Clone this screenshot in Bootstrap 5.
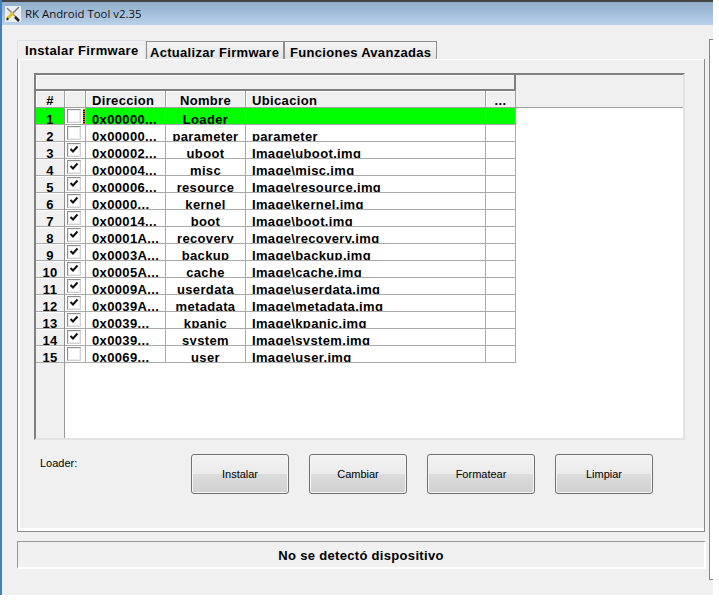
<!DOCTYPE html>
<html lang="es">
<head>
<meta charset="utf-8">
<title>RK Android Tool v2.35</title>
<link href="https://cdn.jsdelivr.net/npm/bootstrap@5.3.0/dist/css/bootstrap.min.css" rel="stylesheet">
<style>
html,body{background:#fff;height:601px;overflow:hidden}
body{font-family:"Liberation Sans",Arial,sans-serif;color:#000}
.tool-window{width:713px;height:595px;background:#f0f0f0;border-left:2px solid #3f7fc4}
.tool-title{height:25px;border-top:2px solid #444;background:linear-gradient(#8facca,#b9d1ea);padding-left:3px;font:11.4px "Open Sans",sans-serif;color:#111}
.tool-title svg{width:16px;height:16px;margin-right:4px}
.tool-main{width:689px;margin-left:15px;padding-top:15px}
.tool-strip{width:4px;height:541px;margin:14px 0 0 3px;background:#fff;border-left:1px solid #84868c;border-top:1px solid #84868c;border-bottom:1px solid #84868c}
.tool-text{font:bold 13px "Liberation Sans",Arial,sans-serif;letter-spacing:.3px;color:#000}
.nav-tabs.tool-tabs{height:19px;border:0;flex-wrap:nowrap}
.tool-tabs .nav-link{height:18px;margin:1px 0 0;padding:0 0 0 3px;border:0;border-top:1px solid #8f8f8f;border-left:1px solid #8f8f8f;border-right:1px solid #8f8f8f;border-radius:0;background:linear-gradient(#f5f5f5,#e4e4e4);line-height:21px;white-space:nowrap;overflow:hidden}
.tool-tabs .nav-link.active{height:19px;margin-top:0;padding:0 0 0 7px;background:#f0f0f0;line-height:20px;color:#000;letter-spacing:.35px}
.tab-first{width:129px}
.tab-second{width:138px}
.tool-tabs .nav-link.tab-third{width:153px;padding-left:5px}
.tool-panel{width:688px;height:473px;padding:14px 0 0 16px;border:1px solid #8a8a8a;border-top:0;box-shadow:inset 2px 1px 0 #fff,inset 0 -3px 0 #fff}
.grid-box{width:651px;height:367px;overflow:hidden;border-top:2px solid #808080;border-left:2px solid #808080;border-right:2px solid #e2e2e2;border-bottom:2px solid #e2e2e2;background:linear-gradient(#f0f0f0,#f0f0f0) left top/100% 32px no-repeat,linear-gradient(#a0a0a0,#a0a0a0) left 32px/100% 1px no-repeat,linear-gradient(to right,#f0f0f0 28px,#999 28px,#999 29px,transparent 29px),#fff}
.grid-table.table{width:480px;table-layout:fixed;border-collapse:separate;border-spacing:0;margin:0;--bs-table-bg:transparent;--bs-table-color:#000}
.grid-table th,.grid-table td{height:17px;padding:7px 0 0;overflow:hidden;white-space:nowrap;text-align:center;vertical-align:top;border:0;border-right:1px solid #aaa;border-bottom:1px solid #aaa;font:bold 13px/9px "Liberation Sans",Arial,sans-serif;letter-spacing:.35px;box-shadow:none}
.grid-table thead th{background:#f0f0f0;border-right-color:#a0a0a0;border-bottom-color:#a0a0a0;padding-top:3px;line-height:13px;box-shadow:inset 1px 1px 0 #fff}
.grid-table thead tr:first-child th{height:16px;border-right:2px solid #808080;border-bottom:2px solid #808080;padding:0}
.grid-table thead tr:last-child th{height:17px}
.grid-table th.cell-left,.grid-table td.cell-left{text-align:left;padding-left:6px}
.grid-table tbody th{background:#f0f0f0;box-shadow:inset 0 1px 0 #fff;border-right-color:#8f8f8f}
.grid-table tbody tr.row-loader th,.grid-table tbody tr.row-loader td{background:#0f0;box-shadow:none}
.grid-table tbody tr.row-loader td.cell-check{background:repeating-linear-gradient(#e07000 0 1px,#111 1px 2px) right 0 top 1px/2px 15px no-repeat,#fff}
.grid-table td.cell-check{padding:1px 0 0 2px;text-align:left;background:#fff}
.grid-table .form-check-input{width:14px;height:14px;margin:0;float:none;display:block;border:1px solid #8e8f8f;border-right-color:#d0d0d0;border-bottom-color:#d0d0d0;border-radius:0;background-color:#fff;box-shadow:inset 0 0 0 1px #ececec;opacity:1}
.grid-table .form-check-input:checked{background-color:#fff;border-color:#8e8f8f #d0d0d0 #d0d0d0 #8e8f8f;background-size:12px 12px;background-image:url("data:image/svg+xml,%3csvg xmlns='http://www.w3.org/2000/svg' viewBox='0 0 12 12'%3e%3cpath fill='none' stroke='%23111' stroke-width='2' d='M2.500 5l2.500 2.500L9.500 2.500'/%3e%3c/svg%3e")}
.tool-actions{margin-top:14px;height:40px}
.tool-label{width:141px;padding:2px 0 0 6px;font-size:11px;line-height:14px}
.tool-btns{gap:20px}
.tool-btn.btn{width:98px;height:40px;padding:0;border:1px solid #707070;border-radius:3px;font-size:11px;color:#000;background:linear-gradient(#f2f2f2 0,#ebebeb 49%,#dcdcdc 50%,#d0d0d0 100%);box-shadow:inset 0 0 0 1px #f6f6f6}
.tool-btn.btn-wide{width:108px}
.tool-status{height:28px;margin-top:9px;border-top:1px solid #999;border-left:1px solid #999;border-right:2px solid #fff;border-bottom:2px solid #fff;line-height:28px;letter-spacing:.32px}
</style>
</head>
<body class="m-0">
<div class="tool-window d-flex flex-column">
  <div class="tool-title d-flex align-items-center">
    <svg viewBox="0 0 16 16" aria-hidden="true"><rect width="16" height="16" fill="#e9eef3"/><path d="M2 2l11 11" stroke="#8a8a8a" stroke-width="1.500"/><path d="M10 11l4 4" stroke="#222" stroke-width="2.500"/><path d="M14 1l-6 6" stroke="#777" stroke-width="1.500"/><path d="M8 7l-6 6" stroke="#e6c21c" stroke-width="3"/><path d="M3 12l-1 2" stroke="#222" stroke-width="2"/></svg>
    <span>RK Android Tool v2.35</span>
  </div>
  <div class="d-flex">
    <div class="tool-main">
      <ul class="nav nav-tabs tool-tabs tool-text">
        <li class="nav-item"><a class="nav-link active tool-text tab-first" href="#">Instalar Firmware</a></li>
        <li class="nav-item"><a class="nav-link tool-text tab-second" href="#">Actualizar Firmware</a></li>
        <li class="nav-item"><a class="nav-link tool-text tab-third" href="#">Funciones Avanzadas</a></li>
      </ul>
      <div class="tool-panel">
        <div class="grid-box">
          <table class="table grid-table">
            <colgroup><col style="width:29px"><col style="width:21px"><col style="width:80px"><col style="width:80px"><col style="width:240px"><col style="width:30px"></colgroup>
            <thead>
              <tr><th colspan="6"></th></tr>
              <tr><th>#</th><th></th><th class="cell-left">Direccion</th><th>Nombre</th><th class="cell-left">Ubicacion</th><th>...</th></tr>
            </thead>
            <tbody>
              <tr class="row-loader"><th>1</th><td class="cell-check"><input class="form-check-input" type="checkbox"></td><td class="cell-left">0x00000...</td><td>Loader</td><td class="cell-left"></td><td></td></tr>
              <tr><th>2</th><td class="cell-check"><input class="form-check-input" type="checkbox"></td><td class="cell-left">0x00000...</td><td>parameter</td><td class="cell-left">parameter</td><td></td></tr>
              <tr><th>3</th><td class="cell-check"><input class="form-check-input" type="checkbox" checked></td><td class="cell-left">0x00002...</td><td>uboot</td><td class="cell-left">Image\uboot.img</td><td></td></tr>
              <tr><th>4</th><td class="cell-check"><input class="form-check-input" type="checkbox" checked></td><td class="cell-left">0x00004...</td><td>misc</td><td class="cell-left">Image\misc.img</td><td></td></tr>
              <tr><th>5</th><td class="cell-check"><input class="form-check-input" type="checkbox" checked></td><td class="cell-left">0x00006...</td><td>resource</td><td class="cell-left">Image\resource.img</td><td></td></tr>
              <tr><th>6</th><td class="cell-check"><input class="form-check-input" type="checkbox" checked></td><td class="cell-left">0x0000...</td><td>kernel</td><td class="cell-left">Image\kernel.img</td><td></td></tr>
              <tr><th>7</th><td class="cell-check"><input class="form-check-input" type="checkbox" checked></td><td class="cell-left">0x00014...</td><td>boot</td><td class="cell-left">Image\boot.img</td><td></td></tr>
              <tr><th>8</th><td class="cell-check"><input class="form-check-input" type="checkbox" checked></td><td class="cell-left">0x0001A...</td><td>recovery</td><td class="cell-left">Image\recovery.img</td><td></td></tr>
              <tr><th>9</th><td class="cell-check"><input class="form-check-input" type="checkbox" checked></td><td class="cell-left">0x0003A...</td><td>backup</td><td class="cell-left">Image\backup.img</td><td></td></tr>
              <tr><th>10</th><td class="cell-check"><input class="form-check-input" type="checkbox" checked></td><td class="cell-left">0x0005A...</td><td>cache</td><td class="cell-left">Image\cache.img</td><td></td></tr>
              <tr><th>11</th><td class="cell-check"><input class="form-check-input" type="checkbox" checked></td><td class="cell-left">0x0009A...</td><td>userdata</td><td class="cell-left">Image\userdata.img</td><td></td></tr>
              <tr><th>12</th><td class="cell-check"><input class="form-check-input" type="checkbox" checked></td><td class="cell-left">0x0039A...</td><td>metadata</td><td class="cell-left">Image\metadata.img</td><td></td></tr>
              <tr><th>13</th><td class="cell-check"><input class="form-check-input" type="checkbox" checked></td><td class="cell-left">0x0039...</td><td>kpanic</td><td class="cell-left">Image\kpanic.img</td><td></td></tr>
              <tr><th>14</th><td class="cell-check"><input class="form-check-input" type="checkbox" checked></td><td class="cell-left">0x0039...</td><td>system</td><td class="cell-left">Image\system.img</td><td></td></tr>
              <tr><th>15</th><td class="cell-check"><input class="form-check-input" type="checkbox"></td><td class="cell-left">0x0069...</td><td>user</td><td class="cell-left">Image\user.img</td><td></td></tr>
            </tbody>
          </table>
        </div>
        <div class="tool-actions d-flex gap-3">
          <div class="tool-label">Loader:</div>
          <div class="d-flex tool-btns">
            <button class="btn tool-btn" type="button">Instalar</button>
            <button class="btn tool-btn" type="button">Cambiar</button>
            <button class="btn tool-btn btn-wide" type="button">Formatear</button>
            <button class="btn tool-btn" type="button">Limpiar</button>
          </div>
        </div>
      </div>
      <div class="tool-status tool-text text-center">No se detectó dispositivo</div>
    </div>
    <div class="tool-strip"></div>
  </div>
</div>
</body>
</html>
